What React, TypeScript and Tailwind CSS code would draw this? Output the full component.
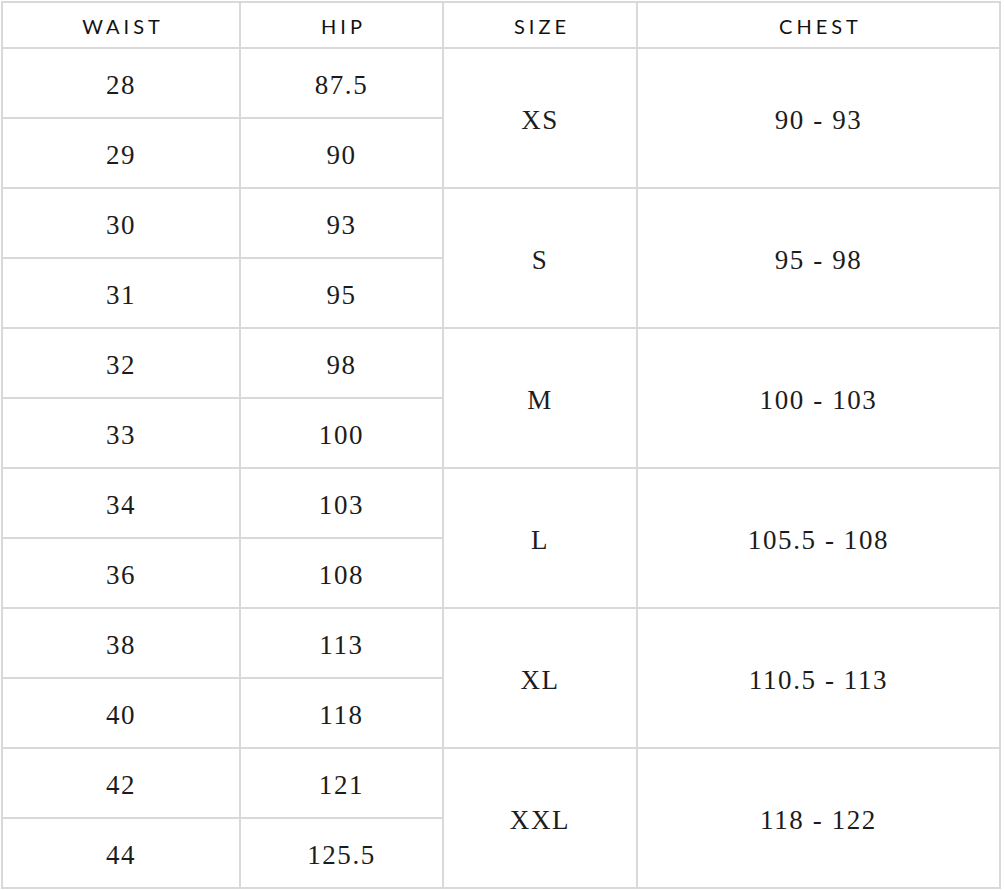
import React from 'react';

interface SizeGroup {
  size: string;
  chest: string;
  rows: { waist: string; hip: string }[];
}

const groups: SizeGroup[] = [
  { size: 'XS', chest: '90 - 93', rows: [{ waist: '28', hip: '87.5' }, { waist: '29', hip: '90' }] },
  { size: 'S', chest: '95 - 98', rows: [{ waist: '30', hip: '93' }, { waist: '31', hip: '95' }] },
  { size: 'M', chest: '100 - 103', rows: [{ waist: '32', hip: '98' }, { waist: '33', hip: '100' }] },
  { size: 'L', chest: '105.5 - 108', rows: [{ waist: '34', hip: '103' }, { waist: '36', hip: '108' }] },
  { size: 'XL', chest: '110.5 - 113', rows: [{ waist: '38', hip: '113' }, { waist: '40', hip: '118' }] },
  { size: 'XXL', chest: '118 - 122', rows: [{ waist: '42', hip: '121' }, { waist: '44', hip: '125.5' }] },
];

const headers = ['WAIST', 'HIP', 'SIZE', 'CHEST'];

const cell = "bg-white flex items-center justify-center pt-[4px] text-[#1c1c1c] font-['Liberation_Serif',serif] text-[27px] tracking-[1.6px]";

export default function App() {
  return (
    <div className="min-h-screen bg-white pt-[1px] pl-[1px]">
      <div className="grid w-[1000px] grid-cols-[236px_201px_192px_361px] grid-rows-[44px_repeat(12,68px)] gap-[2px] bg-[#d9d9d9] p-[2px]">
        {/* Header */}
        {headers.map((h) => (
          <div
            key={h}
            className="bg-white flex items-center justify-center pt-[1px] pl-[4px] text-[#111] font-['Lato',sans-serif] text-[20px] tracking-[4px]"
          >
            {h}
          </div>
        ))}

        {/* Body */}
        {groups.map((g) => (
          <React.Fragment key={g.size}>
            <div className={cell}>{g.rows[0].waist}</div>
            <div className={cell}>{g.rows[0].hip}</div>
            <div className={`${cell} row-span-2`}>{g.size}</div>
            <div className={`${cell} row-span-2`}>{g.chest}</div>
            <div className={cell}>{g.rows[1].waist}</div>
            <div className={cell}>{g.rows[1].hip}</div>
          </React.Fragment>
        ))}
      </div>
    </div>
  );
}
